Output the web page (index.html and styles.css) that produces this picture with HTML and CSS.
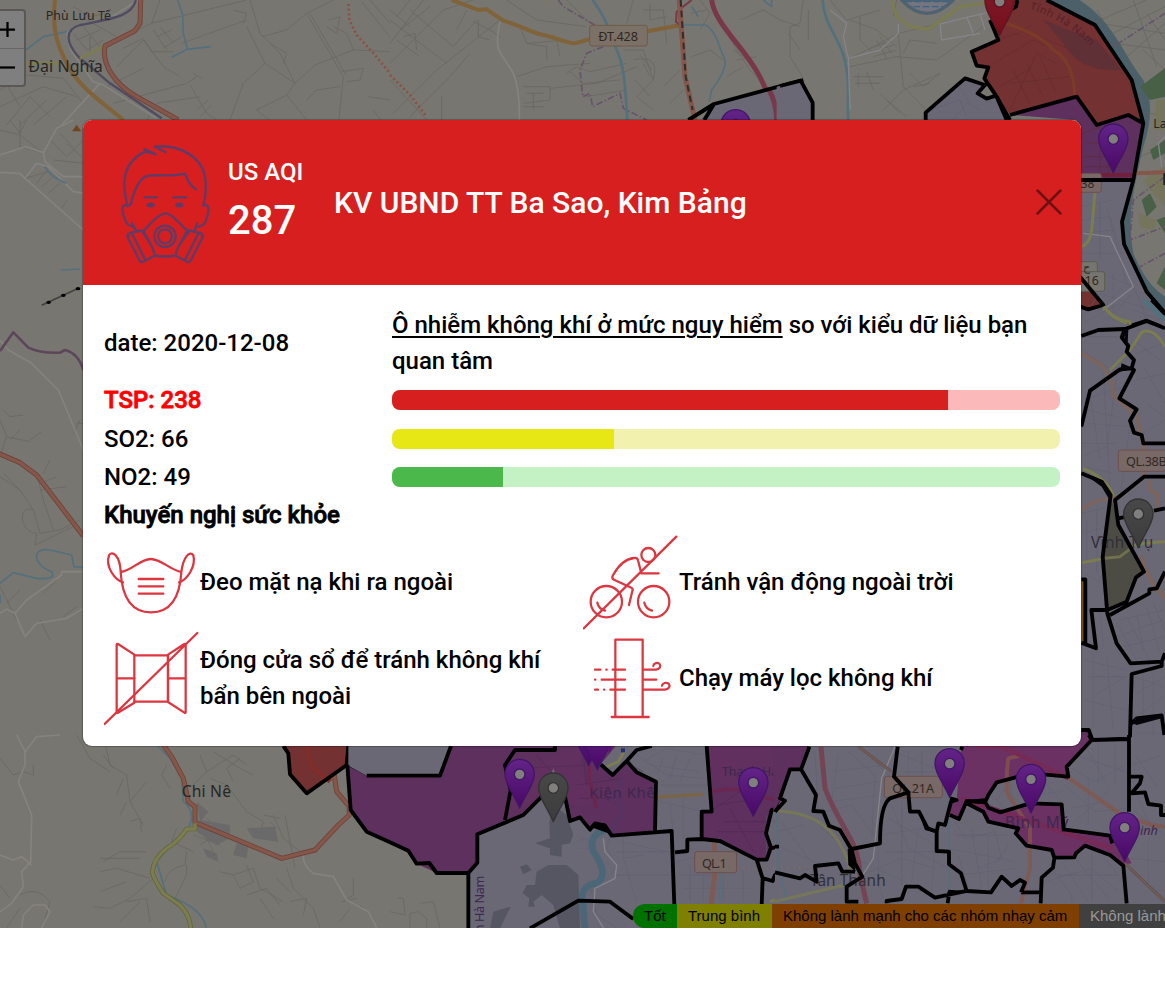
FILE: index.html
```html
<!DOCTYPE html>
<html lang="vi">
<head>
<meta charset="utf-8">
<title>US AQI</title>
<link rel="stylesheet" href="styles.css">
</head>
<body>
<main class="stage">
<svg class="map" viewBox="0 0 1165 928" width="1165" height="928">
  <defs>
    <linearGradient id="gp" x2="0" y2="1"><stop offset="0" stop-color="#622487"/><stop offset="1" stop-color="#4a0866"/></linearGradient>
    <linearGradient id="gg" x2="0" y2="1"><stop offset="0" stop-color="#484848"/><stop offset="1" stop-color="#3c3c3c"/></linearGradient>
    <linearGradient id="gr" x2="0" y2="1"><stop offset="0" stop-color="#7b1c2b"/><stop offset="1" stop-color="#790d19"/></linearGradient>
    <g id="pin"><path d="M0 -146C-25 -146-44 -126-44 -101C-44 -72-23 -51 0 0C23 -51 44 -72 44 -101C44 -126 25 -146 0 -146Z"/><circle cy="-101" r="16" class="hole"/></g>
  </defs>
  <rect width="1165" height="928" class="land"/>

  <!-- north-west -->
  <g transform="scale(.33333)">
    <g class="lane">
      <path d="M0 270L80 225L190 235L250 310M0 320L130 260L230 290M20 375L90 290L150 350M60 375L140 300M100 375L200 290M0 220L60 320M480 0L455 70L320 135M455 70L740 0M370 145L430 115L455 155H520M460 90L500 150M480 80L520 130M470 110L515 90M490 145L545 110M350 200L430 120L490 200L540 230M320 260L430 205M340 310L560 250L590 230M440 360L470 310L600 290M570 255L620 340L650 360M590 330L625 300M600 350L635 315M545 130L740 60M740 80L795 190L885 250L860 285L770 330M750 0L780 100L840 160L885 250L945 195L1060 150L1170 155M795 190L730 250L690 360M770 330L820 370M860 285L920 360M920 40L1000 0M920 40L1030 230L1015 375M930 40L1038 225M920 40L860 90L785 110M985 60L1020 50L1010 100L980 80M1060 150L1040 100L1000 80M1085 5L1170 110M1110 0L1170 70M1025 215L1090 205L1080 240L1040 245M1105 290L1170 300M1120 330L1150 370"/>
      <path d="M220 20L270 50L320 40M220 100L260 150L310 120M250 80L300 140M230 120L300 90M260 60L350 110M270 110V160M700 30L740 40L730 70M920 300L950 270L1020 260M810 130L860 160L850 190M580 220L605 235"/>
    </g>
    <path class="paleroad" d="M415 0L320 60L240 75L200 100L212 150L280 245L310 255L470 355M300 250L185 375"/>
    <path class="water w5" d="M78 150L130 110L200 95M533 0L548 45L550 100L562 148M515 172L562 148L632 140"/>
    <path class="rail" d="M408 0C395 50 340 55 240 75C190 90 200 130 235 170L330 250L485 355"/>
    <path class="lime" d="M78 190L180 190M240 175L315 137"/>
    <path class="orange w12" d="M165 0C155 90 170 140 215 215C250 270 310 310 370 360"/>
    <path class="coralE w14" d="M422 0L420 70L405 92L315 138C305 190 340 250 410 290L535 360"/><path class="coral w10" d="M422 0L420 70L405 92L315 138C305 190 340 250 410 290L535 360"/>
    <path class="dotred" d="M1045 12L1048 60L1070 105L1125 165L1170 220"/>
    <text x="137" y="60" class="lbl" font-size="37" textLength="196">Phù Lưu Tế</text>
    <text x="85" y="215" class="lbl" font-size="48" textLength="223">Đại Nghĩa</text>
  </g>
  <!-- north -->
  <g transform="translate(390) scale(.33333)">
    <g class="lane">
      <path d="M0 130L100 0M0 190L160 30L250 0M0 60L170 190M60 30L190 140L260 60M30 90L120 20M20 120L90 170M0 240L110 360M10 340L140 210L330 60M60 350L180 230L240 160M155 290V360M0 30L60 80M60 0L20 50M40 110L75 100L80 150M230 30L200 90M390 80L410 130L530 120M380 230L470 200L600 190M400 260H480V300L400 310M480 265L620 250L740 200M410 280H460M400 320H460M430 280V330M350 0L440 60L590 80M530 0L600 70M530 220L560 200L600 215L710 190M540 215L580 250L690 240M590 290L710 270M700 150H760L790 240L740 290L790 330M730 0L710 70M760 30H820L830 130M780 10V60L830 50M750 165L785 210M760 190L780 230M735 240L780 290M930 0L960 40L930 90M900 40L950 30M1000 80L1040 150L1080 210L1130 260M1030 150L1090 190M1040 180L1100 170M1050 60L1120 30L1170 60M1010 230L1060 200M905 170L960 150L1000 180M820 260L870 210M840 310L880 270"/>
      <path d="M250 65L300 90L330 110M265 60V110L300 120M410 130L470 140V180M500 120L510 170M730 180Q810 160 790 240"/>
    </g>
    <path class="dotred" d="M0 225L60 285L110 350"/>
    <path class="paleroad" d="M330 65C310 160 330 150 370 220Q390 270 388 360"/>
    <path class="purpdash" d="M505 0L520 20L640 90M640 140L590 160L570 210L578 290L600 280L608 320L690 280L700 325L770 360"/>
    <path class="water w8" d="M608 0C630 30 650 60 680 150C700 190 705 240 712 360"/>
    <path class="water w5" d="M780 95L860 75H945C980 90 985 140 1005 180Q1010 210 965 270L958 305M1120 0L1145 20V0M905 20L925 50"/>
    <path class="orange w12" d="M185 0L265 30L290 28L340 62C400 80 430 100 460 105S530 130 555 130L590 120L690 98L780 92L870 76"/>
    <path class="magenta w6" d="M905 0L860 35L858 65L880 85"/>
    <path class="coral w14" d="M868 0L885 230L915 360"/><path class="railblk" d="M872 0L887 230L908 330"/>
    <path class="magenta w14" d="M965 0C970 40 1000 80 1040 130S1130 240 1155 360"/>
    <rect x="599" y="76" width="173" height="62" rx="7" class="shield"/>
    <text x="625" y="122" font-size="38" textLength="119" class="shieldtxt">ĐT.428</text>
    <path class="zone lav" d="M925 370L972 312L1170 255L1230 240L1270 310V370Z"/><path class="magenta w14" d="M1135 265Q1160 310 1160 360"/>
    <path class="border" d="M895 360L972 312M943 360L972 312L1240 240"/>
    <use href="#pin" x="1037" y="475" class="pinp"/>
  </g>
  <!-- north-east -->
  <g transform="translate(780) scale(.33333)">
    <g class="lane">
      <path d="M70 0L60 70L30 80V170L70 235M0 60L60 80M85 30V120M150 0L200 60L300 30M200 180L280 140L355 100L480 70L580 50M210 60L290 90L350 140M240 50V120L280 160M270 145L330 125M275 155L340 135M280 170L350 150M290 120L320 175M300 110L335 160M355 100L370 260M210 200L350 170L470 180L610 80M220 230H310M225 250H300M235 220V260M260 215L280 270M390 220L430 260L480 220M370 260L440 330M400 260L450 250M300 280L360 340M310 330L370 270L480 220M320 300L380 350M370 160L390 120L470 130M350 0L340 50M25 100L60 150M0 300L40 260L90 300"/>
      <path d="M850 0L960 70L1155 100M960 60L1100 0M980 110L1155 20M1000 130L1155 150M1030 180L1155 70M1060 0L1130 200M1100 40L1155 120M950 30L1000 110M1090 150L1155 210M1090 300L1155 270M1110 340L1155 350M1080 470L1155 440M1100 520L1155 600"/>
    </g>
    <path class="water w8" d="M128 0C130 80 190 120 200 210C210 270 200 320 205 360"/>
    <path class="whiteroad" d="M150 30L200 70L190 110L205 175L210 330M205 175L300 150L355 100V72M480 70L485 120L600 100M480 72L620 38M560 50L580 100M600 40L615 90"/>
    <path class="lime" d="M335 0L350 50L390 80L445 88L540 20L620 8L720 -10"/>
    <path d="M365 0Q440 80 520 0Z" fill="#75757f" stroke="#4e636f" stroke-width="10"/><path class="dashblue" d="M375 5H510M400 20H490"/>
    <!-- river and east bank -->
    <path d="M840 -30C990 30 1020 150 1090 240Q1130 320 1090 440C1060 570 1040 650 1060 760Q1110 880 1180 900V990L1090 900L1000 700L1060 540L1090 370L1050 240L945 75L800 0Z" fill="#4b6069"/>
    <path d="M1080 260L1155 205V290L1110 300ZM1110 450L1155 420V460L1120 480ZM1085 600L1110 580L1130 620L1100 650ZM1130 660L1155 650V700ZM1130 850L1155 800V870Z" fill="#476046"/>
    <path d="M1130 300H1155V390H1120ZM1090 540L1155 500V620L1110 570ZM1075 640L1130 660L1120 690L1080 680Z" fill="#75755c"/>
    <path class="purpdash" d="M1155 40L1000 140L850 30M1155 530L1060 600L1050 720L1155 680M1155 760L1080 800"/>
    <path class="whiteroad" d="M1155 410L1135 430L1145 500"/>
    <!-- districts -->
    <path class="zone lav" d="M-10 260L62 242L100 305V370H-10ZM437 370V338L555 235L615 255L593 280L620 296L650 290L690 370ZM900 540H1060L1026 665L1030 730L1100 875L1170 950V1000H900Z"/>
    <path class="zone red" d="M720 0L800 0L945 75L1050 240L1090 370L1045 345L950 375L890 290L690 345L615 235L625 200L590 195L575 155L655 120L630 60L665 20Z"/>
    <path d="M790 60Q860 90 950 120L1025 210Q900 220 850 130Z" fill="#5f3036"/>
    <path class="zone purp" d="M695 345L890 290L950 375L1045 345L1090 370L1060 540H890V360Z"/>
    <path class="zone red" d="M895 825L970 915L925 928L895 920Z"/>
    <g class="lane onzone"><path d="M450 330L540 300L560 350M520 360L560 310L600 330M540 260L570 310M900 620L1000 600M905 660L990 650L1030 780M910 700L1000 690M900 760H1040M960 610V780M980 620L1040 850M920 800L1060 860L1100 950M950 940L1040 850M980 960L1060 880M1000 820V960M900 960L960 880L1110 930"/><path class="whiteroad" d="M910 700L990 710L1060 860L970 930"/></g>
    <path class="redlane" d="M640 190L760 120L830 150M660 260L760 200M690 330L770 160L830 190M700 210L750 310M740 190L790 290M780 170L830 280M690 250L870 230M700 80L780 110L900 160M640 120L720 100L760 70M910 400L960 380V530M920 430H970M915 470H1030M910 500H1020M985 400V530"/>
    <path d="M660 65Q780 100 820 150Q880 180 885 290" fill="none" stroke="#7c3a28" stroke-width="10"/>
    <path class="lime" d="M945 575L935 690Q930 730 905 740M965 915L1000 950L1040 970"/>
    <path d="M880 525H1060" stroke="#711f3b" stroke-width="12"/><path class="coral w12" d="M1065 520L1155 517"/>
    <rect x="780" y="520" width="184" height="57" rx="7" class="shield pink"/><text x="902" y="563" font-size="36" class="shieldtxt">38</text>
    <rect x="870" y="785" width="82" height="60" rx="7" class="shield gray"/><rect x="870" y="815" width="104" height="59" rx="7" class="shield gray"/><text x="910" y="814" font-size="33" class="shieldtxt">ح</text><text x="914" y="855" font-size="37" class="shieldtxt">16</text>
    <path id="hn" d="M748 28Q860 60 938 145" fill="none"/><text class="lbl redl" font-size="32"><textPath href="#hn" textLength="216">Tỉnh Hà Nam</textPath></text>
    <path class="border" d="M0 258L62 242L98 308V360M437 360V338L555 235L615 255L593 280L620 296L645 288M800 0L945 75L1055 240L1090 370L1060 540L1026 665L1032 732L1100 875L1160 945M712 0L708 20L690 30M630 60L655 120L575 155L590 197L625 202L613 235L650 290L690 360M690 345L890 290L950 375L1045 345L1090 370M900 540H1060M900 830L970 915L925 928L900 920M930 990L1030 985L1100 962L1155 985"/>
    <path class="border" d="M650 290L680 360" stroke-width="18"/>
    <use href="#pin" x="659" y="106" class="pinr"/><use href="#pin" x="1000" y="518" class="pinp"/>
    <text x="1120" y="384" class="lbl" font-size="37">La</text><path d="M1153 520V555" stroke="#222" stroke-width="6"/>
  </g>
  <!-- east -->
  <g transform="translate(1020 300) scale(.33333)">
    <rect x="180" y="75" width="270" height="1310" class="lavfill"/>
    <g class="lane onzone"><path d="M185 150L290 220L260 450M190 300L310 260M200 330L290 350M200 370L330 380L300 590M185 430H290M210 280L240 480M250 220L270 560M185 470L260 440M190 500L280 520M340 120L420 180M350 160L430 130M370 200L435 310M350 240L435 220M380 310L435 350M370 400L435 360M310 570L390 620L435 600M185 640L270 620M190 700L260 680M200 660V780M230 630V820M190 820L250 850M300 960L430 930M290 970L350 1080M320 950L390 1080M290 1010L430 960M310 1040L435 1010M350 940L370 1050M380 920L420 1060M400 910L435 990M190 1080L320 1110M200 1130H320L230 1180M220 1060V1280M260 1070L280 1290M190 1200L320 1230M340 1130L430 1160M350 1180L435 1130M360 1240L430 1190M350 1300H435M370 1110V1270M400 1110V1370M200 880V990M240 940L250 1040M200 110H290M190 70L300 10M340 30L420 60M350 90L410 110"/></g>
    <path class="water w14" d="M370 0L435 60"/><path class="lime" d="M250 20Q280 60 330 65V80M270 210L330 150L365 97Q400 80 435 140M190 505Q270 540 285 600M185 788L280 770Q310 730 435 725"/>
    <path class="peach w10" d="M183 160L245 195Q280 240 280 285L350 350L370 440V530L300 590Q210 600 185 630M390 540V570L415 585L410 620M365 770Q380 840 435 895"/>
    <path d="M275 600L295 665L372 815L345 835L320 905L262 930L250 770Z" fill="#4c4c44"/><path class="lime dim" d="M255 775L300 770L340 740"/>
    <path d="M180 840H194V1028L180 1022Z" fill="#78551a"/>
    <path d="M0 1300H180V1290H206L218 1325L160 1385H0Z" class="purpfill"/>
    <rect x="295" y="450" width="190" height="64" rx="7" class="shield pink"/><text x="318" y="499" font-size="38" class="shieldtxt" textLength="122">QL.38B</text>
    <text x="213" y="743" class="lbl onlav" font-size="46" textLength="187">Vĩnh Trụ</text>
    <path class="border" d="M184 108L235 90L315 87L380 63L435 85M395 0L435 42M315 87L305 112L325 138L320 155L342 180L335 205L300 208L210 272L184 380M335 205L342 210L298 295L350 328L330 362L342 398L365 405L370 430H435M184 520L245 545L272 585L248 770L262 940L290 1030L332 1090L425 1085L435 1060M435 530H372L285 600L295 675L372 815L348 832L320 905L262 930M270 945L388 880V868L410 865L435 815M295 655L320 650M402 632L435 625M184 838H196V1030M184 1028L228 1045L214 930H262M425 1085L425 1098L335 1122L328 1385M330 1275L350 1255L425 1246L435 1320M184 1290H206L218 1322L325 1316M218 1322L160 1380"/>
    <path d="M184 515L245 540L272 575V605L245 560ZM305 190L340 205L300 215ZM335 1268L350 1252L425 1243V1255L350 1275ZM308 87H325L322 150Z" fill="#05050a"/>
    <use href="#pin" x="355" y="743" class="ping"/>
  </g>
  <!-- west -->
  <g transform="translate(0 120) scale(.33333)">
    <g class="lane"><path d="M30 0L60 40L80 0M0 30L60 45L130 100M60 0V80L130 100M150 60L200 110L250 60M180 40L220 80M160 120L250 130M200 70L245 110M75 175L145 155M110 190L140 150M125 200L160 170M145 220L180 190M185 265L200 240M0 900L20 950L90 965M20 950L0 1010M0 1070L60 1110L100 1170L120 1240L180 1230L240 1200M60 1110L10 1060M100 1170C50 1150 60 1240 110 1240L105 1275M105 1275L220 1220M110 1060L130 1140L160 1230M130 1060L150 1020M120 1090L170 1070M120 1110L200 1100M30 960L60 930M10 870L30 890L70 885M90 960L125 935M0 1400L50 1500M20 1450L60 1410M240 900L220 940M230 910H250M130 1420L170 1380M120 1500L150 1560M190 1490L230 1460"/></g>
    <path class="paleroad" d="M0 105L75 80L130 98L170 25L220 0M130 98L135 125L190 170H250M0 157L60 160L75 175L250 330M75 175L110 130L145 140L220 215L250 220M0 660L25 690L95 730L175 810L250 990M0 1480L20 1468L45 1480L80 1440L185 1365V1355H250M45 1480L75 1550M75 1550L110 1510L200 1495L250 1465"/>
    <path class="water w5" d="M182 450L240 447M135 140Q150 170 198 190M0 1390L40 1358L110 1375Q170 1380 155 1355C90 1330 100 1280 150 1290L215 1305L222 1340L250 1342M0 1425V1450"/>
    <path d="M0 693L40 637L85 683Q120 700 180 698L195 690Q235 700 250 750" fill="none" stroke="#5b4759" stroke-width="8"/>
    <path class="coralE w14" d="M-5 1000L60 1028L110 1065L250 1248"/><path class="coral w10" d="M-5 1000L60 1028L110 1065L250 1248"/>
    <path d="M125 556L235 505" stroke="#44413e" stroke-width="5"/><g fill="#000"><ellipse cx="146" cy="547" rx="7" ry="5"/><ellipse cx="190" cy="526" rx="7" ry="5"/><ellipse cx="234" cy="506" rx="7" ry="5"/></g>
    <path d="M216 34L230 14L244 34Z" fill="#70451f"/>
  </g>
  <!-- south-west -->
  <g transform="translate(0 735) scale(.33333)">
    <g class="lane"><path d="M0 70L40 120L70 110M70 110L100 120V90M230 0L270 70L330 110M310 0L330 90L380 120L390 200L430 270M340 100L310 60M370 130L350 180M380 200L360 240M390 260L420 250L425 290M390 200L440 140M300 370H420M300 410L350 400L450 430M310 380L360 350L440 350M300 470L380 440M280 515L330 520L390 490L460 430M380 500L440 490L450 560M360 560L420 500M500 90L485 120L510 160M530 280L515 320L580 350M495 440Q500 400 555 390L560 350M560 390V420L520 500M600 60L620 110L580 150M620 110L700 60L740 90M640 50L720 100L760 120M630 130L680 150L740 230L790 260L780 300M700 140L680 100L720 70M790 240L840 250M810 260L830 280M820 240L850 310L900 350M855 240L885 400M660 410L700 420L720 460L760 440L740 390M700 420L760 400L780 460L850 500M740 480L800 460L840 510M780 490L820 550M860 400L880 460L940 520L960 578M830 430L870 470M870 500L920 490L910 540M1060 430V480L1030 500M1080 510L1120 550M0 450L30 490M60 480Q110 450 150 500L130 570M20 578L60 520M1025 500L1070 490M1020 560L1050 520M600 270L640 350M580 300L660 330M620 250L690 310M600 330L680 280"/></g>
    <path d="M590 200L625 230L600 260ZM600 255L690 270V310L650 330L590 290ZM740 280L825 275L835 320L760 310ZM710 325L745 330L740 370L700 360ZM610 340L650 355L655 380L620 365Z" fill="#6b6a6a"/>
    <path class="paleroad" d="M50 0L75 50V90L55 140L95 240L92 380L65 410L70 455L35 505L0 530M75 50L110 5L180 0M0 360L40 375L65 365L95 390M65 578L70 540L100 510H135L150 530L125 578M910 350Q905 390 940 415L1000 425L1040 495L1105 530L1130 578"/>
    <path class="water w5" d="M470 30L510 70L545 130L550 200Q590 230 565 280L510 330L470 380L500 480Q610 520 618 578"/>
    <path class="coralE w14" d="M490 30L515 65L550 130L565 200L585 215V262L845 370L945 345L1015 270L1048 240V215L1010 170L1000 100L970 110L1000 130"/><path class="coral w10" d="M490 30L515 65L550 130L565 200L585 215V262L845 370L945 345L1015 270L1048 240V215L1010 170L1000 100L970 110L1000 130"/>
    <path class="limeE" d="M585 265V282H560Q535 320 500 340Q460 370 457 412Q460 430 490 475L540 510Q570 540 572 580"/><path class="lime w10" d="M585 265V282H560Q535 320 500 340Q460 370 457 412Q460 430 490 475L540 510Q570 540 572 580"/>
    <path class="zone red" d="M850 20V35L865 55L870 118L920 175L1040 90L1045 20Z"/><path d="M918 30L935 95L990 140" fill="none" stroke="#812d2a" stroke-width="12"/>
    <path class="zone lav" d="M1045 20L1042 90L1100 122H1320L1350 20Z"/>
    <path class="border" d="M850 33L865 55L870 118L920 175L1040 90L1045 33M1042 90L1100 122H1175"/>
    <text x="545" y="187" class="lbl" font-size="47" textLength="148">Chi Nê</text>
  </g>
  <!-- south -->
  <g transform="translate(390 735) scale(.33333)">
    <path class="purpfill" d="M-128 92L-70 122H150L183 30H710L740 100L798 140L795 290L665 300L600 280L540 260L262 298V383L235 414H140L80 386L55 347L-70 290L-118 225Z"/>
    <path class="lavfill" d="M150 122L183 30H-125V92L-70 122ZM235 414L262 383V298L400 240L450 190L490 100L530 190L540 260L570 245L600 284L645 270L665 300L795 290L798 140L740 110L710 80L668 120L632 88L680 30H1170V580H232Z"/>
    <path class="purpfill" d="M950 20L965 230H935V312L990 318L1100 374H1130L1142 335L1128 295L1145 230L1165 220L1200 100H1230L1255 70V20Z"/>
    <path class="magfill" d="M952 30H1255L1200 100L1080 190L960 130ZM380 130L430 110L490 60L570 35V110L620 200L560 220L530 190L490 100L450 190L345 240Z" opacity=".4"/>
    <g fill="#565562"><path d="M490 210L530 240L550 300L540 325L515 330V365L480 360V340L435 325L480 310L478 260ZM440 410L475 390H530L565 420L570 580H510L490 510L455 480L430 500L435 515H415L418 490L398 475L410 450H435ZM390 395L410 388L425 405L400 418ZM310 530L362 515L345 550L330 580H300Z"/></g>
    <g class="lane onzone"><path d="M560 320L590 310L600 340M560 340H600M660 310L650 340L680 390L640 450L600 470M700 310V370L760 360M680 350H840M680 420H840M700 370L740 500M690 320L830 350M600 450L620 540L680 578M740 60L830 120L935 130M780 90L930 110M760 80L830 40L940 60M800 120L820 70M840 130L860 60M870 140L900 70M810 150H950M810 200L940 230M840 210L850 290M880 180V310M860 380L980 350M870 420H980M880 460H1090M900 390V500M940 420V500M1000 420V500M1060 400V500M1130 240V370M1150 250L1170 320"/></g>
    <path class="purplane" d="M700 80L760 110M980 210L1110 190M1000 260H1130M980 290H1130M1000 100L1100 160M1020 220L1090 350M960 230L1080 150L1140 140M440 60L500 130M400 100L600 90M560 150L700 130M570 190H680M580 60L590 150"/>
    <path class="lane" d="M25 490H40L45 540L0 530M60 578V535L85 530L110 550V578M90 505L130 500L150 578"/>
    <path d="M598 90L597 130L620 220" fill="none" class="deep"/><path d="M700 130Q670 180 690 210T655 290" fill="none" stroke="#583260" stroke-width="18"/>
    <path d="M645 285Q595 300 610 350Q660 420 620 445Q570 450 578 500L585 580" fill="none" stroke="#4b6777" stroke-width="20"/>
    <path class="whiteroad" d="M640 310L645 350L680 390L675 430L615 460L610 530L640 578"/>
    <path class="lime" d="M650 95L685 80L705 45M1140 500L1170 490"/><path class="orange w10 dim" d="M800 186L940 178"/><path class="deep" d="M965 170Q1060 150 1100 185L1170 195" fill="none"/>
    <path class="coral w14 dim" d="M972 310L975 360M975 412L963 510"/><path class="water w5" d="M988 310L990 500M1165 230V400"/><path class="dotpeach" d="M1040 400H1170"/>
    <rect x="693" y="40" width="12" height="12" fill="#252c6c"/>
    <rect x="914" y="350" width="126" height="63" rx="7" class="shield pink"/><text x="936" y="399" font-size="38" textLength="74" class="shieldtxt">QL.1</text>
    <text x="598" y="189" class="lbl mauve" font-size="45" textLength="196">Kiện Khê</text><text x="996" y="123" class="lbl mauve" font-size="37" textLength="168">Thanh Hà</text>
    <text class="lbl mauve" font-size="38" transform="translate(283 592) rotate(-90)" textLength="170">h Hà Nam</text>
    <path class="border" d="M-128 90L-118 225L-70 290L0 322L55 347L80 386L118 384L140 414H235V580M0 122H150L183 33M-70 122H0M235 414L262 383V298L400 240L455 185M345 255L362 165L345 90L375 45H495V33M525 185L540 258L570 247L600 284L615 265L645 272L665 302L845 288L853 510M795 290L798 140L740 112L710 78L668 120L632 88M710 78L740 45L785 33M950 33L965 230H935V312L892 314V348L855 352M935 312L990 318L1100 374H1130L1142 340L1165 335M1142 335L1128 295L1145 225L1160 222L1172 185M420 580L565 497L660 500L730 552M1100 374L1118 430L1115 510M1120 430L1148 438L1155 420L1170 415"/>
    <path d="M600 275L615 260L630 268L645 265L670 300Z" fill="#000"/>
    <use href="#pin" x="389" y="219" class="pinp"/><use href="#pin" x="490" y="260" class="ping"/><use href="#pin" x="1090" y="244" class="pinp"/>
    <use href="#pin" x="596" y="92" class="pinp"/><use href="#pin" x="622" y="104" class="pinp"/><path d="M650 33L658 55L669 33Z" fill="#5a1378"/>
  </g>
  <!-- south-east -->
  <g transform="translate(775 735) scale(.33333)">
    <path class="lavfill" d="M0 230L20 190L45 105H75L103 50V30H570L550 240L800 30L950 15L1170 0V580H0Z"/>
    <path class="magfill" d="M560 20H920L918 0H945L950 15L875 95L880 125L770 115L665 142L635 205L680 232L765 205L862 208L865 285L1005 300L1040 330L1070 385L1040 390L1005 360L930 332L900 368L838 372L830 345L755 332L722 295L730 280L640 260L625 230L575 205L552 252L525 240L528 200L545 195Z"/>
    <path class="purpfill" d="M-5 30H103V50L75 103H45L20 190L-5 230Z"/>
    <g class="lane onzone"><path d="M120 50L130 230L210 310M150 230L230 210L310 320M190 60L170 200L310 180M220 50L300 120L290 310M170 110L330 90M180 160L310 140M270 50L350 130M380 60L480 100M390 110H490M400 50V140M440 50V150M130 270L210 340M20 260L100 370M0 330L120 380L210 410M20 430L100 400L210 390M0 290L90 270M240 370L390 440M260 420L380 370L480 400M310 330V450L330 500M340 250L480 330L470 470M320 300L440 280M350 210L400 340L520 400M380 200V450M430 280L410 440M330 350H480M540 260L570 310L660 290L680 370L610 400M520 340L720 380M550 360L580 460M590 280L620 460M640 300V460M540 300H700M560 420L720 400M660 390L700 330M810 440L950 400L1030 470M830 400L890 480V500M860 380L940 500M850 420H1030M900 370L1000 490M950 350V500M980 360L1030 420M680 160L730 200M670 190L710 130M650 180L690 220M700 120L720 230M800 130L860 200M770 180L860 170M890 100L960 140L1050 90M900 60L1050 110M930 30L1000 160M970 20V150M1020 30V150M870 150L960 230L1060 220M890 220L990 200M900 260L1000 170M940 130V270M1080 230L1170 300M1090 190L1130 280M1070 370L1170 380M1080 420L1150 470M1120 320V460M1070 90L1160 60M1080 60L1150 160"/><path class="whiteroad" d="M360 35L320 130L295 370L260 425"/></g>
    <path class="water w5" d="M522 200L523 490M5 230L10 400L35 500M1060 40V230"/>
    <path class="lime dim" d="M0 228Q180 230 225 400M0 500Q120 470 210 450M210 420L240 400"/>
    <path class="magenta w14 dim" d="M138 35L150 160C200 290 250 310 255 420L275 505"/><path class="coral w12 dim" d="M740 60L700 70Q690 150 700 180L765 280V400L738 505M875 125L1040 240L1130 270L1170 275"/>
    <path d="M600 35H680L880 130M560 190L1010 340" fill="none" stroke="#762a56" stroke-width="13"/>
    <path d="M250 35L350 110M1050 385L1170 500" stroke="#555" stroke-width="9"/><path d="M250 35L350 110M1050 385L1170 500" stroke="#82594f" stroke-width="4"/><path class="dotpeach" d="M0 398H200"/>
    <rect x="328" y="124" width="174" height="64" rx="7" class="shield pink"/><text x="352" y="173" font-size="38" textLength="125" class="shieldtxt">QL.21A</text>
    <text x="105" y="454" class="lbl onlav" font-size="46" textLength="227">Tân Thành</text><text x="690" y="280" class="lbl mauve" font-size="46" textLength="190">Bình Mỹ</text><text x="1095" y="300" class="lbl mauve" font-size="38" font-style="italic">inh</text>
    <path class="border" d="M103 35L98 50L78 103H45L15 190L30 197L0 230M78 103L123 180L115 228L145 230L162 272L195 285L230 345L240 385L262 425L215 455V500H250M230 342L315 325Q315 210 345 190L400 172L357 125L368 35M400 172L405 230H432L458 280L485 290V348L522 350V388L558 415L575 468M485 290L490 265L510 270L528 200L545 195L525 190M525 240L552 252L575 198L630 202L640 180L665 142L770 115L880 125L875 95L950 15L942 0M950 15L1062 12M633 205L640 218L675 232L765 205L860 208L866 283L1005 302L1012 325M575 205L625 230L640 260L730 280L722 295L755 332L830 345L838 368L898 367L903 355L930 332L1005 360L1045 392L1055 505M838 370L834 398L800 428L797 505M738 472H797M738 472L750 443L735 435L710 453L680 425L648 472L575 468L480 488L430 455H393L380 492L335 498V505M518 505L523 470M1062 0V230M1062 125H1100L1095 145L1070 175L1110 172L1120 207L1158 212V240H1170M0 412L75 430L90 420L125 440L120 393L190 385L202 410H240M0 335H12M562 35L558 45"/>
    <path d="M218 342L232 340L242 410L220 390ZM575 195L630 190V203L580 203ZM520 464L575 468L518 480ZM430 230L460 285L480 292L450 285Z" fill="#000"/>
    <use href="#pin" x="524" y="187" class="pinp"/><use href="#pin" x="768" y="234" class="pinp"/><use href="#pin" x="1049" y="379" class="pinp"/>
  </g>
</svg>

<div class="zoomctl"><span class="zoombtn"><svg viewBox="0 0 16 16"><path d="M0 8H16M8 0V16"/></svg></span><span class="zoombtn"><svg viewBox="0 0 16 16"><path d="M0 8H16"/></svg></span></div>
<div class="legend"><span class="good">Tốt</span><span class="moderate">Trung bình</span><span class="sensitive">Không lành mạnh cho các nhóm nhạy cảm</span><span class="unhealthy">Không lành mạnh</span></div>

<section class="modal">
  <header class="head">
    <svg class="face" viewBox="100 90 300 380">
      <path d="M134 284C116 210 120 155 188 121M216 107C280 100 368 130 369 220Q370 255 362 284M185 114L219 130M188 121L219 130M216 107L249 124M134 286Q148 282 148 264Q166 205 190 196C220 187 260 200 307 188Q318 222 340 235M134 284C113 275 118 305 127 325Q132 344 150 347M148 337L160 358M362 284C382 275 380 304 370 327Q366 343 348 347M343 337L336 358"/>
      <path d="M185 259H223M272 259H310M190 352Q230 307 248 307T305 352M190 352Q183 361 178 361M178 361Q216 414 215 433Q247 440 280 433Q278 414 320 361M305 352L320 361M138 375Q130 370 142 366L174 359Q183 358 187 369L209 410Q219 431 213 436L180 453Q174 455 170 447L134 377M149 370L188 447M357 375Q365 370 353 366L321 359Q312 358 308 369L286 410Q276 431 282 436L315 453Q321 455 325 447L361 377M346 370L307 447"/>
      <circle cx="247" cy="376" r="32"/><circle cx="247" cy="376" r="21"/>
      <ellipse cx="204" cy="282" rx="9" ry="4" class="eye"/><ellipse cx="290" cy="282" rx="9" ry="4" class="eye"/>
    </svg>
    <div class="aqi"><span class="aqi-name">US AQI</span><span class="aqi-value">287</span></div>
    <h1 class="station">KV UBND TT Ba Sao, Kim Bảng</h1>
    <svg class="close" viewBox="0 0 24 24"><path d="M1.5 1.5L22.5 22.5M22.5 1.5L1.5 22.5"/></svg>
  </header>
  <div class="content">
    <div class="metrics">
      <span class="date">date: 2020-12-08</span>
      <p class="note"><u>Ô nhiễm không khí ở mức nguy hiểm</u> so với kiểu dữ liệu bạn quan tâm</p>
      <span class="tsp">TSP: 238</span><div class="bar bar-red"><i style="width:83.3%"></i></div>
      <span>SO2: 66</span><div class="bar bar-yellow"><i style="width:33.3%"></i></div>
      <span>NO2: 49</span><div class="bar bar-green"><i style="width:16.6%"></i></div>
    </div>
    <h2 class="advice-title">Khuyến nghị sức khỏe</h2>
    <div class="advice">
      <div class="tip"><svg viewBox="27 12 288 288"><path d="M77 126C110 123 135 87 167 87S225 120 259 126Q252 247 168 247T77 126C75 75 50 60 42 76C30 110 60 150 84 157M259 126C265 80 285 60 295 76C304 110 275 150 252 157M131 147H205M131 169H205M131 191H205"/></svg><span>Đeo mặt nạ khi ra ngoài</span></div>
      <div class="tip"><svg viewBox="39 12 288 288"><path d="M41 295L319 20M132 149Q123 145 130 134Q156 88 192 84Q202 82 204 91L214 130H266M132 149L184 173Q190 177 187 183L177 225M82 218Q86 236 105 242M223 218Q227 236 246 242"/><circle cx="109" cy="215" r="47"/><circle cx="251" cy="215" r="47"/><circle cx="235" cy="75" r="21"/></svg><span>Tránh vận động ngoài trời</span></div>
      <div class="tip"><svg viewBox="27 300 288 288"><path d="M29 582L307 309M118 374L69 342Q65 340 65 345V546Q65 551 69 548L118 518M118 376H219V515H118M219 374L268 342Q272 340 272 345V546Q272 551 268 548L219 516M66 445H118M219 445H272"/><path d="M118 376V515M219 376V515"/></svg><span>Đóng cửa sổ để tránh không khí bẩn bên ngoài</span></div>
      <div class="tip"><svg viewBox="39 300 288 288"><path d="M136 561V329H218V561M125 561H236M75 419H91M109 419H110M128 419H165M75 449H76M95 449H165M75 479H84M102 479H103M121 479H165M218 419H258C278 416 272 394 256 400Q250 402 250 408M218 449H259M218 479H285C306 476 300 455 284 459Q277 461 276 467"/></svg><span>Chạy máy lọc không khí</span></div>
    </div>
  </div>
</section>
</main>
</body>
</html>
```
FILE: styles.css
```css
* { box-sizing: border-box; }
body { margin: 0; background: #fff; font-family: Roboto, sans-serif; overflow: hidden; }
.stage { position: relative; width: 1165px; height: 989px; overflow: hidden; }
.map { display: block; }

.land { fill: #787670; }
.lavfill, .lav { fill: #6a6875; }
.red { fill: #733131; }
.purp, .purpfill { fill: #5d305d; }
.magfill { fill: #6a3162; }
.map path { stroke-linejoin: round; }
.lane path, path.lane { fill: none; stroke: #696762; stroke-width: 2.5; }
.onzone path { stroke: #5f5f70; opacity: .6; }
.redlane { fill: none; stroke: #622a2b; stroke-width: 2.5; opacity: .6; }
.purplane { fill: none; stroke: #4c2850; stroke-width: 2.5; opacity: .6; }
.paleroad { fill: none; stroke: #85837f; stroke-width: 5; }
.map .whiteroad { fill: none; stroke: #85858a; stroke-width: 4; opacity: 1; }
.water { fill: none; stroke: #53707d; }
.rail { fill: none; stroke: #514b62; stroke-width: 7; }
.railblk { fill: none; stroke: #302d2b; stroke-width: 6; stroke-dasharray: 20 12; }
.lime { fill: none; stroke: #7b7c50; stroke-width: 9; }
.limeE { fill: none; stroke: #606236; stroke-width: 14; }
.orange { fill: none; stroke: #806338; }
.coral { fill: none; stroke: #85564a; }
.coralE { fill: none; stroke: #6d4338; }
.peach { fill: none; stroke: #7d645a; }
.magenta { fill: none; stroke: #78384a; }
.deep { stroke: #6b264f; stroke-width: 10; }
.dim { opacity: .75; }
.purpdash { fill: none; stroke: #66546b; stroke-width: 5; stroke-dasharray: 20 7 4 7; }
.dotred { fill: none; stroke: #8b5145; stroke-width: 8; stroke-dasharray: 6 8; }
.dotpeach { fill: none; stroke: #84675d; stroke-width: 8; stroke-dasharray: 4 14; }
.dashblue { stroke: #3c6386; stroke-width: 4; stroke-dasharray: 20 8; }
.w5 { stroke-width: 5; }
.w6 { stroke-width: 6; }
.w8 { stroke-width: 8; }
.w10 { stroke-width: 10; }
.w12 { stroke-width: 12; }
.w14 { stroke-width: 15; }
.border { fill: none; stroke: #000; stroke-width: 11.5; }
.shield { fill: #7b7166; stroke: #6f5b46; stroke-width: 3; }
.pink { fill: #786866; stroke: #6b4f50; }
.gray { fill: #777570; stroke: #5b5b50; }
.map text { font-family: "Noto Sans", sans-serif; }
.shieldtxt { fill: #302823; }
.lbl { fill: #262626; }
.onlav { fill: #302f3a; }
.mauve { fill: #3e2750; }
.redl { fill: #57202b; }
.pinp { fill: url(#gp); stroke: #421568; stroke-width: 4; }
.ping { fill: url(#gg); stroke: #333; stroke-width: 4; }
.pinr { fill: url(#gr); stroke: #5d1722; stroke-width: 4; }
.hole { fill: #817f7e; }

.zoomctl { position: absolute; left: -13px; top: 9px; width: 39px; height: 78px; border: 2px solid #595856; border-radius: 4px; background: #7f7f7f; display: grid; grid-template-rows: 1fr 1fr; }
.zoombtn { display: flex; align-items: center; justify-content: center; }
.zoombtn + .zoombtn { border-top: 1px solid #666; }
.zoombtn svg { width: 15px; height: 15px; margin-left: 2px; fill: none; stroke: #000; stroke-width: 2.4; }

.legend { position: absolute; left: 633px; top: 904px; height: 24px; display: flex; font: 15px/24px "Liberation Sans", Arial, sans-serif; color: #000; white-space: nowrap; }
.legend span { padding: 0 11px; }
.legend .good { width: 44px; background: #007200; border-radius: 12px 0 0 12px; }
.legend .moderate { width: 95px; background: #7f7f00; }
.legend .sensitive { width: 307px; background: #7f3f00; }
.legend .unhealthy { background: #404040; color: #999; }

.modal { position: absolute; left: 83px; top: 120px; width: 998px; height: 626px; border-radius: 9px; background: #fff; overflow: hidden; box-shadow: 0 0 1px 1px rgba(0,0,0,.25); font-size: 24px; font-weight: 500; line-height: 36px; color: #000; }
.head { height: 165px; padding: 0 19px 0 33px; display: flex; align-items: center; background: #d81f1f; color: #fff; }
.face { width: 100px; height: 126.67px; margin-top: 3px; fill: none; stroke: #5f3b66; stroke-width: 7; stroke-linecap: round; stroke-linejoin: round; }
.face .eye { fill: #5f3b66; }
.aqi { width: 106px; margin-left: 12px; display: flex; flex-direction: column; }
.aqi-name { line-height: 34px; padding-bottom: 2px; }
.aqi-value { font-size: 40px; line-height: 60px; }
.station { flex: 1; margin: 0; font-size: 30px; line-height: 36px; font-weight: 500; }
.close { width: 26px; height: 26px; margin-bottom: 2px; fill: none; stroke: #6c1010; stroke-width: 2.6; stroke-linecap: round; }
.content { padding: 22px 21px; }
.metrics { display: grid; grid-template-columns: 288px 668px; grid-template-rows: 74px 38.5px 38.5px 38.5px; align-items: center; }
.date, .note { margin: 0 0 2px; }
.note u { text-underline-offset: 3px; text-decoration-thickness: 2px; }
.tsp { color: #f00; -webkit-text-stroke: .8px #f00; }
.bar { height: 20px; border-radius: 8px; overflow: hidden; }
.bar i { display: block; height: 100%; }
.bar-red { background: #fcb9b9; }
.bar-red i { background: #d81f1f; }
.bar-yellow { background: #f3f1ae; }
.bar-yellow i { background: #e7e716; }
.bar-green { background: #c5f2c5; }
.bar-green i { background: #4ab84a; }
.advice-title { margin: 0; font-size: 24px; line-height: 37px; font-weight: 500; -webkit-text-stroke: .8px #000; }
.advice { display: grid; grid-template-columns: 479px 479px; grid-auto-rows: 96px; }
.tip { display: flex; align-items: center; }
.tip svg { width: 96px; height: 96px; flex: none; fill: none; stroke: #dc3740; stroke-width: 6.8; stroke-linecap: round; stroke-linejoin: round; }
.tip span { width: 350px; }
```
